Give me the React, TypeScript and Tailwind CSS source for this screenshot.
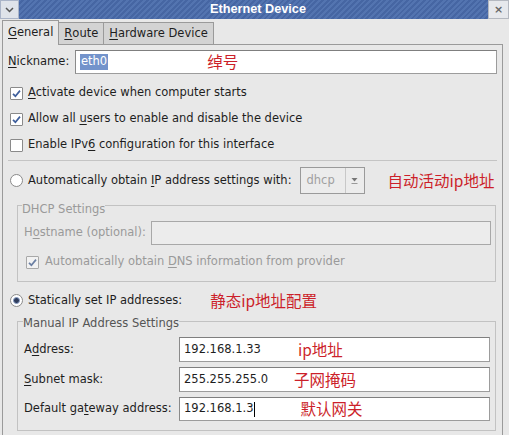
import type { ReactNode } from 'react';

const cjk = "font-['Noto_Sans_CJK_SC',sans-serif] text-[15.5px] text-[#cc1f2a] leading-none whitespace-nowrap";

function Mn({ children }: { children: ReactNode }) {
  return <span className="underline underline-offset-[2px] decoration-[1px]">{children}</span>;
}

function Check({ checked, disabled }: { checked?: boolean; disabled?: boolean }) {
  return (
    <span
      className={
        'flex h-[13px] w-[13px] shrink-0 items-center justify-center rounded-[1px] border ' +
        (disabled ? 'border-[#a8a8a8] bg-[#f2f2f2]' : 'border-[#8a8a8a] bg-white')
      }
    >
      {checked && (
        <svg width="11" height="11" viewBox="0 0 11 11">
          <path
            d="M2 5.8 L4.4 8.2 L9 2.6"
            fill="none"
            stroke={disabled ? '#6b7fa3' : '#3f5f9c'}
            strokeWidth="1.7"
          />
        </svg>
      )}
    </span>
  );
}

function Radio({ on }: { on?: boolean }) {
  return (
    <span className="flex h-[13px] w-[13px] shrink-0 items-center justify-center rounded-full border border-[#8a8a8a] bg-white">
      {on && <span className="h-[7px] w-[7px] rounded-full border border-[#8aa0c8] bg-[#2f3d5c]" />}
    </span>
  );
}

function TextBox({ children, className = '' }: { children?: ReactNode; className?: string }) {
  return (
    <div
      className={
        'flex items-center border border-[#9c9c9c] border-t-[#7f7f7f] border-l-[#8a8a8a] bg-white pl-[4px] ' +
        className
      }
    >
      {children}
    </div>
  );
}

export default function App() {
  return (
    <div className="h-[435px] w-[509px] overflow-hidden bg-[#e8e8e8] font-['DejaVu_Sans','Liberation_Sans',sans-serif] text-[11.5px] leading-none text-[#1e1e1e]">
      {/* title bar */}
      <div className="flex h-[19px]">
        <div className="flex w-[19px] items-center justify-center border border-[#aab4c8] bg-[#dfe3ea]">
          <svg width="9" height="6" viewBox="0 0 9 6">
            <path d="M1 1 L4.5 4.5 L8 1" fill="none" stroke="#555" strokeWidth="1.5" />
          </svg>
        </div>
        <div className="flex flex-1 items-center justify-center bg-[repeating-linear-gradient(135deg,#5374b0_0px,#5374b0_2px,#4666a3_2px,#4666a3_4px)] pl-[9px] font-['Liberation_Sans',sans-serif] text-[12.7px] font-bold text-white">
          Ethernet Device
        </div>
        <div className="flex w-[21px] items-center justify-center border border-[#b4b8c0] bg-[#e6e8ec] text-[11px] font-bold text-[#666]">
          ×
        </div>
      </div>

      {/* tabs */}
      <div className="flex h-[25px] items-end pl-[2px]">
        <div className="relative z-10 -mb-px flex h-[25px] items-center border border-b-0 border-[#9a9a9a] bg-[#e8e8e8] px-[5px]">
          <Mn>G</Mn>eneral
        </div>
        <div className="flex h-[22px] items-center border border-b-0 border-l-0 border-[#9a9a9a] bg-[#d3d3d3] px-[5px]">
          <Mn>R</Mn>oute
        </div>
        <div className="flex h-[22px] items-center border border-b-0 border-l-0 border-[#9a9a9a] bg-[#d3d3d3] px-[5px]">
          <Mn>H</Mn>ardware Device
        </div>
      </div>

      {/* page */}
      <div className="ml-[2px] mr-[6px] h-[400px] border border-b-0 border-[#9a9a9a] px-[5px] pt-[5px]">
        <div className="flex h-[24px] items-center">
          <div className="w-[67px]">
            <Mn>N</Mn>ickname:
          </div>
          <TextBox className="h-[24px] flex-1">
            <span className="bg-[#7393cb] px-px py-[2px] text-white">eth0</span>
            <span className={cjk + ' ml-[99px]'}>绰号</span>
          </TextBox>
        </div>

        <div className="mt-[6px] flex h-[26px] items-center gap-[5px] pl-[2px]">
          <Check checked />
          <span>
            <Mn>A</Mn>ctivate device when computer starts
          </span>
        </div>
        <div className="flex h-[26px] items-center gap-[5px] pl-[2px]">
          <Check checked />
          <span>
            Allow all <Mn>u</Mn>sers to enable and disable the device
          </span>
        </div>
        <div className="flex h-[26px] items-center gap-[5px] pl-[2px]">
          <Check />
          <span>
            Enable IPv<Mn>6</Mn> configuration for this interface
          </span>
        </div>

        <div className="mt-[2px] h-px border-t border-[#c4c4c4]" />

        <div className="mt-[6px] flex h-[27px] items-center whitespace-nowrap pl-[2px]">
          <Radio />
          <span className="ml-[5px] shrink-0">
            Automatically obtain <Mn>I</Mn>P address settings with:
          </span>
          <div className="ml-[8px] flex h-[27px] w-[65px] shrink-0 items-stretch border border-[#9a9a9a] bg-[#ececec]">
            <div className="flex flex-1 items-center pl-[6px] text-[#a0a0a0]">dhcp</div>
            <div className="flex w-[19px] flex-col items-center justify-center border-l border-[#c8c8c8]">
              <svg width="7" height="8" viewBox="0 0 7 8">
                <path d="M0.5 1 L6.5 1 L3.5 4.5 Z" fill="#777" />
                <path d="M0.5 6.5 L6.5 6.5" stroke="#999" strokeWidth="1" />
              </svg>
            </div>
          </div>
          <span className={cjk + ' ml-[23px]'}>自动活动ip地址</span>
        </div>

        {/* DHCP settings */}
        <fieldset className="ml-[9px] mr-px border border-[#c2c2c2] px-[6px] pb-[6px] text-[#9a9a9a]">
          <legend className="-ml-[2px] pt-[8px] leading-[14px]">DHCP Settings</legend>
          <div className="mt-[5px] flex h-[24px] items-center">
            <div className="w-[127px]">
              H<Mn>o</Mn>stname (optional):
            </div>
            <div className="mr-[-2px] h-[24px] flex-1 border border-[#a8a8a8] bg-[#ececec]" />
          </div>
          <div className="mt-[4px] flex h-[26px] items-center gap-[6px] pl-[2px]">
            <Check checked disabled />
            <span>
              Automatically obtain <Mn>D</Mn>NS information from provider
            </span>
          </div>
        </fieldset>

        <div className="mt-[7px] flex h-[23px] items-center pl-[2px]">
          <Radio on />
          <span className="ml-[5px]">Statically set IP addresses:</span>
          <span className={cjk + ' ml-[28px]'}>静态ip地址配置</span>
        </div>

        {/* Manual settings */}
        <fieldset className="ml-[9px] mr-px border border-[#c2c2c2] px-[6px] pb-[9px]">
          <legend className="-ml-[1px] pt-[4px] leading-[14px] text-[#555]">Manual IP Address Settings</legend>
          <div className="mt-[7px] grid grid-cols-[155px_1fr] gap-y-[5px]">
            <div className="flex h-[25px] items-center">
              A<Mn>d</Mn>dress:
            </div>
            <TextBox className="-mr-[1px] h-[25px]">
              <span className="w-[114px]">192.168.1.33</span>
              <span className={cjk}>ip地址</span>
            </TextBox>
            <div className="flex h-[25px] items-center">
              <Mn>S</Mn>ubnet mask:
            </div>
            <TextBox className="-mr-[1px] h-[25px]">
              <span className="w-[110px]">255.255.255.0</span>
              <span className={cjk}>子网掩码</span>
            </TextBox>
            <div className="flex h-[24px] items-center">
              Default ga<Mn>t</Mn>eway address:
            </div>
            <TextBox className="-mr-[1px] h-[24px]">
              <span>192.168.1.3</span>
              <span className="h-[15px] w-px bg-black" />
              <span className={cjk + ' ml-[46px]'}>默认网关</span>
            </TextBox>
          </div>
        </fieldset>
      </div>
    </div>
  );
}
